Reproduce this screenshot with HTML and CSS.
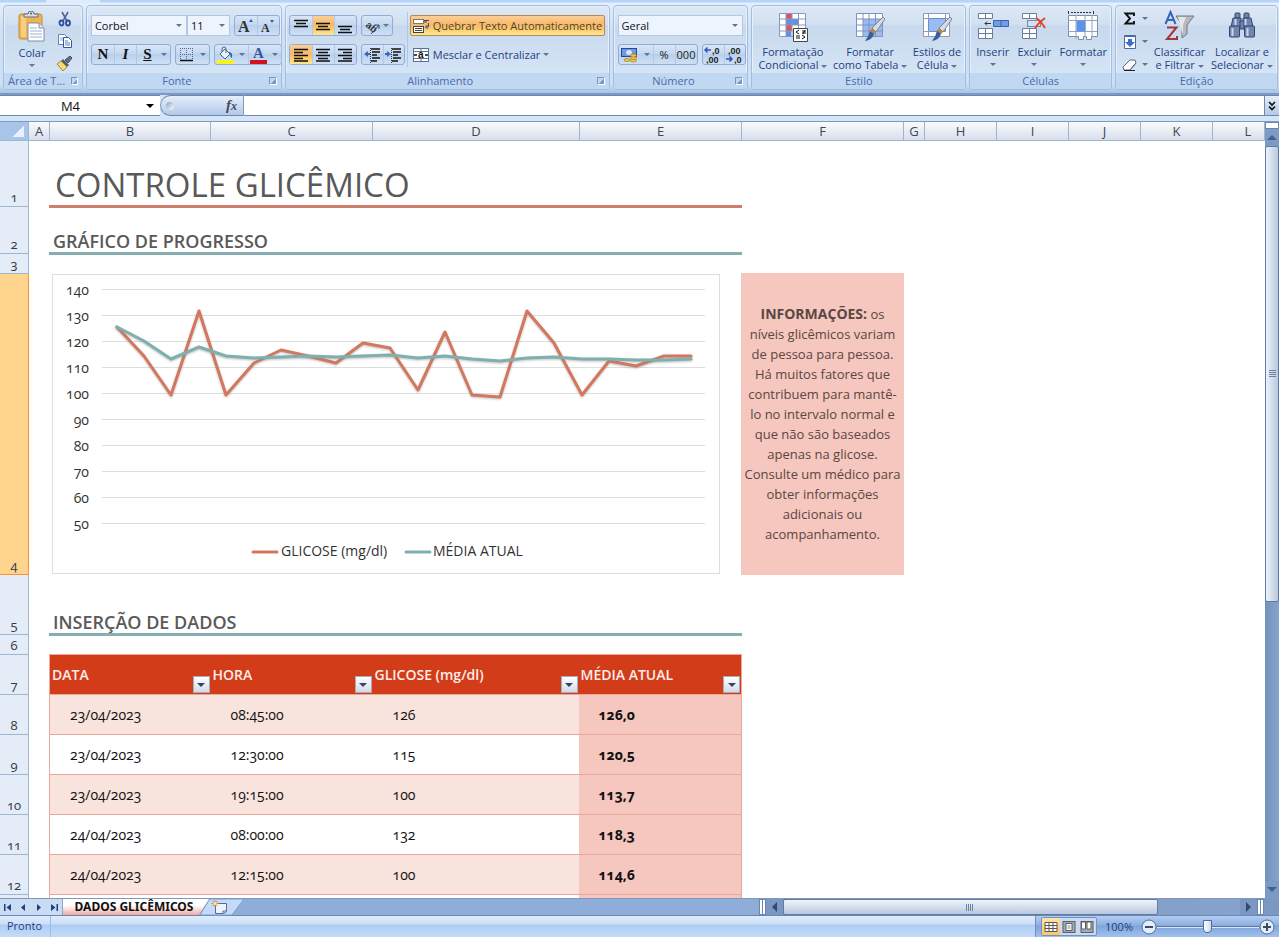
FILE: index.html
```html
<!DOCTYPE html>
<html lang="pt-BR">
<head>
<meta charset="utf-8">
<title>Controle Glicêmico</title>
<link rel="stylesheet" href="styles.css">
</head>
<body>
<div class="app">
  <header class="ribbon">
    <section class="group">
      <div class="group-body clipboard">
        <button class="big">
          <svg width="28" height="32" viewBox="0 0 28 32"><rect x="1" y="3" width="23" height="25" rx="2" fill="#efb453" stroke="#c58a35"/><path d="M3 5h5v21H3z" fill="#f8cd7e"/><path d="M6 6V3h4a3 3 0 0 1 6 0h4v3z" fill="#d9dee6" stroke="#6b6f78"/><circle cx="13" cy="2.500" r="1" fill="#555"/><path d="M10 12h11l5 5v13H10z" fill="#fff" stroke="#7e8eab"/><path d="M21 12v5h5" fill="#dbe5f5" stroke="#7e8eab"/><path d="M12 17h7M12 20h12M12 23h12M12 26h12" stroke="#9db0d0"/></svg>
          <span>Colar</span><i class="caret"></i>
        </button>
        <div class="stack">
          <button aria-label="Recortar"><svg width="16" height="16" viewBox="0 0 16 16"><path d="M5 1l5 9M11 1L6 10" stroke="#51689b" stroke-width="1.600" fill="none"/><ellipse cx="4.500" cy="12" rx="2" ry="2.500" fill="none" stroke="#2e4ba3" stroke-width="1.800"/><ellipse cx="11" cy="12" rx="2" ry="2.500" fill="none" stroke="#2e4ba3" stroke-width="1.800"/></svg></button>
          <button aria-label="Copiar"><svg width="16" height="16" viewBox="0 0 16 16"><path d="M1.500 1.500h6l3 3v7h-9z" fill="#fff" stroke="#6180b8"/><path d="M3 5h5M3 7h5" stroke="#8aa3d2"/><path d="M6.500 4.500h5l3 3v7h-8z" fill="#fff" stroke="#35559f"/><path d="M8 8h3M8 10h5M8 12h5" stroke="#5f7fc0"/></svg></button>
          <button aria-label="Pincel de formatação"><svg width="16" height="16" viewBox="0 0 16 16"><path d="M13 1l2 2-4 5-3-3z" fill="#6b6f86" stroke="#444a63"/><path d="M6 4l6 6-2 2-6-6z" fill="#525b74"/><path d="M4 6l6 6-4 4-6-7z" fill="#f3d97c" stroke="#a98735"/></svg></button>
        </div>
      </div>
      <footer><span>Área de T...</span><button class="launch" aria-label="Opções da área de transferência"></button></footer>
    </section>

    <section class="group">
      <div class="group-body rows">
        <div class="line">
          <span class="combos"><span class="combo font-name"><select aria-label="Fonte"><option>Corbel</option></select></span><span class="combo font-size"><select aria-label="Tamanho da fonte"><option>11</option></select></span></span>
          <span class="set">
            <button aria-label="Aumentar fonte"><svg width="18" height="18" viewBox="0 0 18 18"><text x="1" y="15" class="glyph-lg">A</text><path d="M12 5l2-3 2 3z" fill="#3b5da0"/></svg></button>
            <button aria-label="Diminuir fonte"><svg width="18" height="18" viewBox="0 0 18 18"><text x="2" y="15" class="glyph-sm">A</text><path d="M11 3h4l-2 3z" fill="#3b5da0"/></svg></button>
          </span>
        </div>
        <div class="line">
          <span class="set"><button class="serif">N</button><button class="serif italic">I</button><button class="serif under">S</button><button class="arrow" aria-label="Mais sublinhados"><i class="caret"></i></button></span>
          <span class="set"><button class="tight" aria-label="Bordas"><svg width="15" height="15" viewBox="0 0 15 15"><path d="M1 1.500h13M1 7.500h13M1.500 1v12M7.500 1v12M13.500 1v12" stroke="#53658a" stroke-dasharray="1 1"/><path d="M1 13.500h13" stroke="#111" stroke-width="1.500"/></svg></button><button class="arrow" aria-label="Mais bordas"><i class="caret"></i></button></span>
          <span class="set">
            <button class="tight" aria-label="Cor de preenchimento"><svg width="17" height="18" viewBox="0 0 17 18"><path d="M3 8l5-5 5 5-5 5z" fill="#e9f0fa" stroke="#52658e"/><path d="M5 6V3a2 2 0 0 1 4 0v4" fill="none" stroke="#52658e"/><path d="M11 6q5-1 4 6q-2-1-2-4z" fill="#345fb0"/><rect y="14" width="17" height="4" fill="#f6f523"/></svg></button><button class="arrow" aria-label="Mais cores de preenchimento"><i class="caret"></i></button>
            <button class="tight" aria-label="Cor da fonte"><svg width="17" height="18" viewBox="0 0 17 18"><text x="3" y="12" class="glyph-blue">A</text><rect y="14" width="17" height="4" fill="#d3121f"/></svg></button><button class="arrow" aria-label="Mais cores da fonte"><i class="caret"></i></button>
          </span>
        </div>
      </div>
      <footer><span>Fonte</span><button class="launch" aria-label="Opções de fonte"></button></footer>
    </section>

    <section class="group">
      <div class="group-body align">
        <div class="rows left">
          <div class="line">
            <span class="set">
              <button aria-label="Alinhar em cima"><svg width="16" height="16" viewBox="0 0 16 16"><path d="M1 2.500h14M3 5.500h10M1 8.500h14" stroke="#111" stroke-width="1.500"/></svg></button>
              <button class="on" aria-label="Alinhar no meio"><svg width="16" height="16" viewBox="0 0 16 16"><path d="M1 5.500h14M3 8.500h10M1 11.500h14" stroke="#111" stroke-width="1.500"/></svg></button>
              <button aria-label="Alinhar embaixo"><svg width="16" height="16" viewBox="0 0 16 16"><path d="M1 8.500h14M3 11.500h10M1 14.500h14" stroke="#111" stroke-width="1.500"/></svg></button>
            </span>
            <span class="set"><button aria-label="Orientação"><svg width="18" height="18" viewBox="0 0 18 18"><text x="2" y="9" transform="rotate(40 2 9)" class="glyph-ab">ab</text><path d="M8 17l8-9m-4 0h4v4" fill="none" stroke="#39445c"/></svg><i class="caret"></i></button></span>
          </div>
          <div class="line">
            <span class="set">
              <button class="on" aria-label="Alinhar à esquerda"><svg width="16" height="16" viewBox="0 0 16 16"><path d="M1 2.500h14M1 5.500h9M1 8.500h14M1 11.500h9M1 14h14" stroke="#111" stroke-width="1.400"/></svg></button>
              <button aria-label="Centralizar"><svg width="16" height="16" viewBox="0 0 16 16"><path d="M1 2.500h14M3 5.500h10M1 8.500h14M3 11.500h10M1 14h14" stroke="#111" stroke-width="1.400"/></svg></button>
              <button aria-label="Alinhar à direita"><svg width="16" height="16" viewBox="0 0 16 16"><path d="M1 2.500h14M6 5.500h9M1 8.500h14M6 11.500h9M1 14h14" stroke="#111" stroke-width="1.400"/></svg></button>
            </span>
            <span class="set">
              <button class="tight" aria-label="Diminuir recuo"><svg width="17" height="16" viewBox="0 0 17 16"><path d="M7 2h9M8 5h8M8 8h5M8 11h8M7 14h6" stroke="#111" stroke-width="1.600"/><path d="M6.500 1v15" stroke="#333" stroke-dasharray="1 1"/><path d="M0 7l4-3v2h2v2H4v2z" fill="#3f66be"/></svg></button>
              <button class="tight" aria-label="Aumentar recuo"><svg width="17" height="16" viewBox="0 0 17 16"><path d="M7 2h9M8 5h8M8 8h5M8 11h8M7 14h6" stroke="#111" stroke-width="1.600"/><path d="M6.500 1v15" stroke="#333" stroke-dasharray="1 1"/><path d="M6 7L2 4v2H0v2h2v2z" fill="#3f66be"/></svg></button>
            </span>
          </div>
        </div>
        <div class="rows right">
          <button class="wide on"><svg width="17" height="16" viewBox="0 0 17 16"><rect x=".5" y="1.500" width="10" height="4" fill="#fff" stroke="#777"/><path d="M11 2.500h5M11 4h3" stroke="#444"/><rect x=".5" y="8.500" width="10" height="6" fill="#fff" stroke="#444"/><path d="M2 10.500h7M2 12.500h7" stroke="#444"/><path d="M15.500 5v4l-3 0m2-2l-2 2 2 2" fill="none" stroke="#2e4ba3"/></svg><span>Quebrar Texto Automaticamente</span></button>
          <button class="wide"><svg width="17" height="16" viewBox="0 0 17 16"><rect x=".5" y="1.500" width="15" height="13" fill="#fff" stroke="#5d6f92"/><path d="M.5 4.500h15M.5 11.500h15M8 1.500v3M8 11.500v3" stroke="#5d6f92"/><text x="5" y="11" class="glyph-a">a</text><path d="M1 8h3M12 8h3" stroke="#111" stroke-width="1.500"/></svg><span>Mesclar e Centralizar</span><i class="caret"></i></button>
        </div>
      </div>
      <footer><span>Alinhamento</span><button class="launch" aria-label="Opções de alinhamento"></button></footer>
    </section>

    <section class="group">
      <div class="group-body rows">
        <div class="line"><span class="combo number"><select aria-label="Formato de número"><option>Geral</option></select></span></div>
        <div class="line">
          <span class="set">
            <button aria-label="Formato de contabilização"><svg width="17" height="16" viewBox="0 0 17 16"><rect x=".5" y="1.500" width="15" height="8" fill="#6f98dd" stroke="#24499b"/><ellipse cx="8" cy="5.500" rx="3" ry="2.500" fill="#d5e4fb"/><g fill="#f5c642" stroke="#9c6e15" stroke-width=".6"><ellipse cx="12.500" cy="13.500" rx="3" ry="1.500"/><ellipse cx="12.500" cy="11" rx="3" ry="1.500"/><ellipse cx="12.500" cy="8.500" rx="3" ry="1.500"/><ellipse cx="6" cy="13" rx="3" ry="1.500"/></g></svg></button><button class="arrow" aria-label="Mais moedas"><i class="caret"></i></button><button class="num">%</button><button class="num">000</button>
          </span>
          <span class="set">
            <button class="tight" aria-label="Aumentar casas decimais"><svg width="18" height="18" viewBox="0 0 18 18"><path d="M1 4h6M3.500 1.500L1 4l2.500 2.500" fill="none" stroke="#2c56b8" stroke-width="1.500"/><text x="8" y="8" class="digits">,0</text><text x="2" y="17" class="digits">,00</text></svg></button>
            <button class="tight" aria-label="Diminuir casas decimais"><svg width="18" height="18" viewBox="0 0 18 18"><text x="2" y="8" class="digits">,00</text><path d="M0 13h6M3.500 10.500L6 13l-2.500 2.500" fill="none" stroke="#2c56b8" stroke-width="1.500"/><text x="8" y="17" class="digits">,0</text></svg></button>
          </span>
        </div>
      </div>
      <footer><span>Número</span><button class="launch" aria-label="Opções de número"></button></footer>
    </section>

    <section class="group">
      <div class="group-body bigs">
        <button class="big">
          <svg width="30" height="32" viewBox="0 0 30 32"><path d="M1.500 3.500h26v23h-26z" fill="#fff"/><path d="M8 3h6v6H8zM8 15h6v6H8z" fill="#e2525a"/><path d="M8 9h12v6H8zM8 21h5v6H8z" fill="#6290dd"/><path d="M1.500 3.500h26v23h-26zM8 3v24M14 3v24M20.500 3v24M1 9h27M1 15h27M1 21h27" fill="none" stroke="#8599bd"/><path d="M15.500 18.500h14v13h-14z" fill="#fff" stroke="#444"/><path d="M21 20l-3 2 3 2M18 26h4M18 28h4M24 21h4M24 23h4M27 20l-2 4M24 25l3 2-3 2" fill="none" stroke="#111"/></svg>
          <span>Formatação<br>Condicional <i class="caret"></i></span>
        </button>
        <button class="big">
          <svg width="30" height="32" viewBox="0 0 30 32"><path d="M1.500 3.500h26v23h-26z" fill="#fff"/><path d="M8 9h20v18H8z" fill="#98bcf2"/><path d="M1.500 3.500h26v23h-26zM8 3v24M14 3v24M20.500 3v24M1 9h27M1 15h27M1 21h27" fill="none" stroke="#7d93bd"/><path d="M28 7l2 2-9 13-4-4z" fill="#d5dbe4" stroke="#7b8492"/><path d="M17 18l4 4-3 3-4-3z" fill="#bd8545"/><path d="M15 21l4 3q-2 6-9 7 4-5 5-10z" fill="#375f9e"/></svg>
          <span>Formatar<br>como Tabela <i class="caret"></i></span>
        </button>
        <button class="big">
          <svg width="30" height="32" viewBox="0 0 30 32"><path d="M1.500 3.500h26v23h-26z" fill="#fff" stroke="#8b9cb9"/><path d="M6.500 8.500h17v13h-17z" fill="#9abcf4" stroke="#6f8dc3"/><path d="M6.500 3v5M23.500 3v5M6.500 22v5M1 8.500h5M24 8.500h4M1 21.500h5" stroke="#8b9cb9"/><path d="M28 7l2 2-9 13-4-4z" fill="#d5dbe4" stroke="#7b8492"/><path d="M17 18l4 4-3 3-4-3z" fill="#bd8545"/><path d="M15 21l4 3q-2 6-9 7 4-5 5-10z" fill="#375f9e"/></svg>
          <span>Estilos de<br>Célula <i class="caret"></i></span>
        </button>
      </div>
      <footer><span>Estilo</span></footer>
    </section>

    <section class="group">
      <div class="group-body bigs">
        <button class="big">
          <svg width="32" height="32" viewBox="0 0 32 32"><path d="M1.500 3.500h14v5h-14zM8.500 3.500v5M1.500 18.500h14v10h-14zM8.500 18.500v10M1.500 23.500h14" fill="#fff" stroke="#6b7d9e"/><path d="M16.500 10.500h15v6h-15zM24 10.500v6" fill="#6f9de6" stroke="#3a63ab"/><path d="M14 13.500H8m2-2l-2 2 2 2" fill="none" stroke="#333"/></svg>
          <span>Inserir</span><i class="caret"></i>
        </button>
        <button class="big">
          <svg width="30" height="32" viewBox="0 0 30 32"><path d="M3.500 3.500h14v5h-14zM10.500 3.500v5M3.500 18.500h14v10h-14zM10.500 18.500v10M3.500 23.500h14" fill="#fff" stroke="#6b7d9e"/><path d="M8.500 10.500h13v6h-13z" fill="#cfe0f8" stroke="#333" stroke-dasharray="1 1"/><path d="M17 8q5 3 9 10M26 8q-6 4-10 10" fill="none" stroke="#e8402c" stroke-width="2"/></svg>
          <span>Excluir</span><i class="caret"></i>
        </button>
        <button class="big">
          <svg width="32" height="32" viewBox="0 0 32 32"><path d="M1.500 1v3M26.500 1v3" stroke="#333"/><path d="M4 2.500h21" stroke="#333" stroke-dasharray="2 1"/><path d="M1.500 5.500h29v21h-6v3h-5v-3h-3v3h-5v-3h-10z" fill="#fff" stroke="#7d8fae"/><path d="M9 5v24M18 5v22M25 5v22M1 10.500h29M1 21.500h29" stroke="#93a4c2"/><path d="M9.500 10.500h9v11h-9z" fill="#5f93e8"/></svg>
          <span>Formatar</span><i class="caret"></i>
        </button>
      </div>
      <footer><span>Células</span></footer>
    </section>

    <section class="group">
      <div class="group-body bigs edit">
        <div class="stack">
          <button aria-label="Soma"><svg width="15" height="15" viewBox="0 0 15 15"><path d="M12 5V2.500H3.500L8 7.500l-4.500 5H12V10" fill="none" stroke="#111" stroke-width="1.900"/></svg><i class="caret"></i></button>
          <button aria-label="Preencher"><svg width="14" height="16" viewBox="0 0 14 16"><path d="M1.500 1.500h11v13h-11z" fill="#fff" stroke="#4b69a5"/><path d="M1 2.500h12" stroke="#4b69a5"/><path d="M5 5h4v3h3l-5 5-5-5h3z" fill="#3a6fd0"/></svg><i class="caret"></i></button>
          <button aria-label="Limpar"><svg width="15" height="14" viewBox="0 0 15 14"><path d="M1 9l7-7h5l1 3-6 7H2z" fill="#fff" stroke="#5d6879"/><path d="M8 12l6-7" stroke="#5d6879"/><path d="M2 12.500h11" stroke="#222"/></svg><i class="caret"></i></button>
        </div>
        <button class="big">
          <svg width="32" height="32" viewBox="0 0 32 32"><path d="M12 6h18l-7 9v9l-5 4V15z" fill="#b9babd" stroke="#77797e"/><path d="M14 7h8l-3 8v10z" fill="#e5e6e8"/><path d="M1.500 14L6.500 2l5 12M3.500 10h6" fill="none" stroke="#3465bb" stroke-width="2"/><path d="M3 17.500h9.500L3 29h10v-3" fill="none" stroke="#a4373b" stroke-width="2"/></svg>
          <span>Classificar<br>e Filtrar <i class="caret"></i></span>
        </button>
        <button class="big">
          <svg width="32" height="32" viewBox="0 0 32 32"><g fill="#7085ad" stroke="#35466d"><rect x="9" y="3" width="5" height="5" rx="1"/><rect x="18" y="3" width="5" height="5" rx="1"/><path d="M7 8h8v9H5zM17 8h8l2 9H17z"/><rect x="14" y="11" width="4" height="8"/><rect x="3.500" y="16" width="10" height="11" rx="1"/><rect x="18.500" y="16" width="10" height="11" rx="1"/></g><path d="M6.500 18v8M21.500 18v8M9.500 9v6M19.500 9v6" stroke="#c9d6ee" stroke-width="2"/></svg>
          <span>Localizar e<br>Selecionar <i class="caret"></i></span>
        </button>
      </div>
      <footer><span>Edição</span></footer>
    </section>
  </header>

  <div class="formula">
    <div class="name-box"><input aria-label="Caixa de nome" value="M4"><button class="drop" aria-label="Nomes definidos"></button></div>
    <div class="fx"><i class="knob"></i><button aria-label="Inserir função"><em>f</em><em class="sub">x</em></button></div>
    <input class="formula-input" aria-label="Barra de fórmulas">
    <button class="expand" aria-label="Expandir barra de fórmulas"><svg width="8" height="10" viewBox="0 0 8 10"><path d="M1 1l3 3 3-3M1 5.500l3 3 3-3" fill="none" stroke="#111" stroke-width="1.600"/></svg></button>
  </div>

  <main class="work">
    <div class="sheet">
      <div class="ch corner"></div><div class="ch">A</div><div class="ch">B</div><div class="ch">C</div><div class="ch">D</div><div class="ch">E</div><div class="ch">F</div><div class="ch">G</div><div class="ch">H</div><div class="ch">I</div><div class="ch">J</div><div class="ch">K</div><div class="ch last">L</div>
      <div class="rh">1</div><div class="rh">2</div><div class="rh">3</div><div class="rh selected">4</div><div class="rh">5</div><div class="rh">6</div><div class="rh">7</div><div class="rh">8</div><div class="rh">9</div><div class="rh">10</div><div class="rh">11</div><div class="rh">12</div><div class="rh"></div>

      <h1>CONTROLE GLICÊMICO</h1>
      <h2 class="progress">GRÁFICO DE PROGRESSO</h2>
      <figure class="chart">
        <svg width="668" height="300" viewBox="0 0 668 300" role="img" aria-label="Gráfico de progresso">
          <rect class="frame" x=".5" y=".5" width="667" height="299"/>
          <path class="grid" d="M50 15.500h603M50 41.500h603M50 67.500h603M50 93.500h603M50 119.500h603M50 145.500h603M50 171.500h603M50 197.500h603M50 223.500h603M50 249.500h603"/>
          <g class="axis"><text x="37" y="21">140</text><text x="37" y="47">130</text><text x="37" y="73">120</text><text x="37" y="99">110</text><text x="37" y="125">100</text><text x="37" y="151">90</text><text x="37" y="177">80</text><text x="37" y="203">70</text><text x="37" y="229">60</text><text x="37" y="255">50</text></g>
          <polyline class="series glucose" points="65,53 92,82 119,121 147,37 174,121 202,89 229,76 256,82 284,89 311,69 338,74 366,116 393,58 420,121 448,123 475,37 502,69 530,121 557,87 584,92 612,82 639,82"/>
          <polyline class="series mean" points="65,53 92,67 119,85 147,73 174,82 202,84 229,83 256,82 284,83 311,82 338,81 366,84 393,82 420,85 448,87 475,84 502,83 530,85 557,85 584,86 612,86 639,85"/>
          <path class="key glucose" d="M201 278h24"/><text class="legend" x="229" y="282">GLICOSE (mg/dl)</text>
          <path class="key mean" d="M354 278h24"/><text class="legend" x="381" y="282">MÉDIA ATUAL</text>
        </svg>
      </figure>
      <aside><p><b>INFORMAÇÕES:</b> os<br>níveis glicêmicos variam<br>de pessoa para pessoa.<br>Há muitos fatores que<br>contribuem para mantê-<br>lo no intervalo normal e<br>que não são baseados<br>apenas na glicose.<br>Consulte um médico para<br>obter informações<br>adicionais ou<br>acompanhamento.</p></aside>
      <h2 class="entry">INSERÇÃO DE DADOS</h2>
      <table>
        <colgroup><col class="c-date"><col class="c-time"><col class="c-value"><col class="c-mean"></colgroup>
        <thead><tr>
          <th><div>DATA<button class="filter" aria-label="Filtrar data"></button></div></th>
          <th><div>HORA<button class="filter" aria-label="Filtrar hora"></button></div></th>
          <th><div>GLICOSE (mg/dl)<button class="filter" aria-label="Filtrar glicose"></button></div></th>
          <th><div>MÉDIA ATUAL<button class="filter" aria-label="Filtrar média"></button></div></th>
        </tr></thead>
        <tbody>
          <tr><td>23/04/2023</td><td>08:45:00</td><td>126</td><td>126,0</td></tr>
          <tr><td>23/04/2023</td><td>12:30:00</td><td>115</td><td>120,5</td></tr>
          <tr><td>23/04/2023</td><td>19:15:00</td><td>100</td><td>113,7</td></tr>
          <tr><td>24/04/2023</td><td>08:00:00</td><td>132</td><td>118,3</td></tr>
          <tr><td>24/04/2023</td><td>12:15:00</td><td>100</td><td>114,6</td></tr>
          <tr><td></td><td></td><td></td><td></td></tr>
        </tbody>
      </table>
    </div>
    <div class="vscroll">
      <i class="split"></i>
      <button class="up" aria-label="Rolar para cima"></button>
      <div class="track"><div class="thumb"></div></div>
      <button class="down" aria-label="Rolar para baixo"></button>
    </div>
  </main>

  <div class="tabs">
    <nav>
      <button aria-label="Primeira planilha"><svg width="9" height="9" viewBox="0 0 9 9"><path d="M1 1h1.500v7H1zM8 1v7L3.500 4.500z"/></svg></button>
      <button aria-label="Planilha anterior"><svg width="9" height="9" viewBox="0 0 9 9"><path d="M6 1v7L2 4.500z"/></svg></button>
      <button aria-label="Próxima planilha"><svg width="9" height="9" viewBox="0 0 9 9"><path d="M3 1v7l4-3.500z"/></svg></button>
      <button aria-label="Última planilha"><svg width="9" height="9" viewBox="0 0 9 9"><path d="M6.500 1H8v7H6.500zM1 1v7l4.500-3.500z"/></svg></button>
    </nav>
    <button class="tab">DADOS GLICÊMICOS</button>
    <button class="new-tab" aria-label="Inserir planilha"><svg width="46" height="17" viewBox="0 0 46 17"><path d="M1 16L10 1q1-1 3-1h32L33 16z" fill="#c3dbf8" stroke="#7b9cd0"/><path d="M16.500 4.500h11v8l-3 2h-8z" fill="#eef4fd" stroke="#5a6c94"/><path d="M24 14v-2h3" fill="none" stroke="#5a6c94"/><path d="M16 1v7M12.500 4.500h7M13.500 2l5 5M18.500 2l-5 5" stroke="#d98a24"/><circle cx="16" cy="4.500" r="1.500" fill="#ffe9a0"/></svg></button>
    <div class="hscroll">
      <i class="vsplit"></i>
      <button class="prev" aria-label="Rolar para a esquerda"></button>
      <div class="track"><div class="thumb"></div></div>
      <button class="next" aria-label="Rolar para a direita"></button>
      <i class="vsplit"></i>
    </div>
  </div>

  <footer class="status">
    <span class="ready">Pronto</span>
    <div class="views">
      <span class="view-set">
        <button class="on" aria-label="Normal"><svg width="14" height="12" viewBox="0 0 14 12"><path d="M1 1.500h12v9H1zM5 1.500v9M9 1.500v9M1 4.500h12M1 7.500h12" fill="#fff" stroke="#5d5a55"/></svg></button>
        <button aria-label="Layout da página"><svg width="14" height="12" viewBox="0 0 14 12"><rect x="1" y=".5" width="12" height="11" fill="#a5a9b0" stroke="#5d5f66"/><path d="M4 2.500h6v7H4z" fill="#fff" stroke="#5d5f66"/><path d="M5.500 5h3M5.500 7h3" stroke="#888"/></svg></button>
        <button aria-label="Visualização de quebra de página"><svg width="14" height="12" viewBox="0 0 14 12"><rect x="1" y=".5" width="12" height="11" fill="#a5a9b0" stroke="#5d5f66"/><path d="M1.500 1h4v7h-4zM7 1h4v7H7z" fill="#fff" stroke="#5d5f66"/></svg></button>
      </span>
      <button class="pct">100%</button>
      <button class="round" aria-label="Reduzir"><svg width="16" height="16" viewBox="0 0 16 16"><circle cx="8" cy="8" r="7" fill="#e2ecfa" stroke="#4f6c9c"/><path d="M4 8h8" stroke="#3f4b62" stroke-width="2"/></svg></button>
      <input type="range" aria-label="Zoom" min="0" max="100" value="49">
      <button class="round" aria-label="Ampliar"><svg width="16" height="16" viewBox="0 0 16 16"><circle cx="8" cy="8" r="7" fill="#e2ecfa" stroke="#4f6c9c"/><path d="M4 8h8M8 4v8" stroke="#3f4b62" stroke-width="2"/></svg></button>
    </div>
  </footer>
</div>
</body>
</html>
```
FILE: styles.css
```css
* { box-sizing: border-box; }
body { margin: 0; }
.app { display: flex; flex-direction: column; height: 100vh; overflow: hidden; background: #bcd5f5; font: 11px/14px "Open Sans", "Noto Sans", sans-serif; color: #1f3f7f; }
button, input, select { font: inherit; color: inherit; margin: 0; padding: 0; border: 0; background: none; }
button { display: flex; align-items: center; justify-content: center; white-space: nowrap; }
svg { flex: none; display: block; }

.caret { display: inline-block; flex: none; width: 0; border: 3px solid transparent; border-top-color: #5f7499; border-bottom: 0; vertical-align: middle; }

/* Ribbon */
.ribbon { display: grid; grid-template-columns: 80fr 196fr 325fr 136fr 215fr 143fr 163fr; gap: 3px; flex: none; height: 95px; padding: 5px 1px 3px 3px; border-bottom: 2px solid #7d9ac4; background: linear-gradient(#dfecfb, #dfecfb) 46px 0 / 54px 3px no-repeat, linear-gradient(#b5d3f8 0, #b5d3f8 2px, #e3effc 3px, #d0e0f4 30px, #cde0f6 84px, #a8c3e6 93px); }
.group { display: flex; flex-direction: column; min-width: 0; overflow: hidden; border: 1px solid #a3bddf; border-radius: 4px; background: linear-gradient(#dde8f5, #d2e0f1 18px, #c8d9ed 20px, #d8e8f8); box-shadow: inset 0 0 0 1px #e8f1fb; }
.group-body { flex: 1; min-height: 0; }
.group footer { display: flex; align-items: center; height: 16px; padding: 0 4px; background: #c0d8f1; color: #4a6cab; }
.group footer span { flex: 1; text-align: center; white-space: nowrap; }
.launch { width: 8px; height: 8px; margin-left: 6px; border: 1px solid #fff; border-top-color: #7e97bd; border-left-color: #7e97bd; background: linear-gradient(135deg, transparent 55%, #7f97bd 55%); }
.clipboard { display: flex; justify-content: space-between; padding: 5px 9px 0 14px; }
.clipboard .stack { display: flex; flex-direction: column; gap: 6px; }
.big { flex-direction: column; justify-content: flex-start; line-height: 13px; text-align: center; }
.big span { padding-top: 3px; }
.big > .caret { margin-top: 5px; }
.rows { display: flex; flex-direction: column; gap: 8px; padding: 9px 4px 0 4px; }
.line { display: flex; justify-content: space-between; gap: 4px; height: 21px; }
.set { display: flex; border: 1px solid #8fadd6; border-radius: 3px; background: linear-gradient(#d8e6f7, #c5d8f0 45%, #b9d0ec 50%, #cfe0f5); }
.set button { min-width: 22px; padding: 0 1px; }
.set .tight { min-width: 21px; }
.set button + button { border-left: 1px solid #b2c9e6; }
.set .arrow { min-width: 11px; border-left: 0; }
.set .caret { margin: 0 2px; }
.set .on, .wide.on { background: linear-gradient(#fbcf98, #f9b76a 45%, #fbc463 60%, #fee593); }
.serif { font: bold 15px "Liberation Serif", serif; color: #111; }
.italic { font-style: italic; }
.under { text-decoration: underline; }
.num { color: #222; }
.combos { display: flex; }
.combo { display: flex; align-items: center; border: 1px solid #b0c7e5; background: #edf4fd; color: #111; }
.combo select { width: 100%; height: 100%; padding-left: 3px; appearance: none; outline: 0; }
.combo::after { content: ""; flex: none; margin-right: 4px; border: 3px solid transparent; border-top-color: #5f7499; border-bottom: 0; }
.font-name { width: 96px; }
.font-size { width: 43px; }
.number { flex: 1; }
.align { display: flex; }
.align .left { padding: 9px 2px 0 3px; }
.left .line { justify-content: flex-start; }
.align .right { flex: 1; align-items: flex-start; padding: 9px 0 0 3px; margin-bottom: 6px; background: linear-gradient(#b0c6e2, #b0c6e2) 0 6px / 1px 100% no-repeat; }
.wide { gap: 3px; height: 21px; padding: 0 2px; border: 1px solid transparent; border-radius: 2px; }
.wide.on { border-color: #b38b54; color: #4d4531; }
.bigs { display: flex; justify-content: space-between; padding: 4px 4px 0 6px; }
.edit .stack { display: flex; flex-direction: column; gap: 6px; }
.edit .stack button { gap: 5px; height: 17px; }
.glyph-lg { font: bold 16px "Liberation Serif", serif; fill: #333; }
.glyph-sm { font: bold 12px "Liberation Serif", serif; fill: #333; }
.glyph-blue { font: bold 15px "Liberation Serif", serif; fill: #33589c; }
.glyph-ab { font: bold 10px "Liberation Sans", sans-serif; fill: #333; }
.glyph-a { font: bold 10px "Liberation Sans", sans-serif; fill: #111; }
.digits { font: bold 9px "Liberation Sans", sans-serif; fill: #222; }

/* Formula bar */
.formula { display: flex; flex: none; height: 27px; padding-bottom: 5px; border-bottom: 1px solid #7e98bf; background: #d5e5f8; color: #111; }
.formula > * { border-top: 1px solid #6f87ab; border-bottom: 1px solid #6f87ab; }
.name-box { display: flex; align-items: center; width: 160px; background: #fff; }
.name-box input { flex: 1; min-width: 0; padding: 0 5px 0 0; text-align: center; font-size: 13px; outline: 0; }
.drop { margin: 0 6px 0 0; border: 4px solid transparent; border-top: 4px solid #000; border-bottom: 0; }
.fx { display: flex; align-items: center; justify-content: space-between; width: 84px; padding: 0 6px 0 5px; border-left: 1px solid #8397b7; border-right: 1px solid #8397b7; border-radius: 11px 0 0 11px; background: linear-gradient(#e6eefa, #b3c9ea); }
.knob { width: 8px; height: 8px; border-radius: 50%; background: linear-gradient(135deg, #8f9fb9, #fff); }
.fx button { align-items: baseline; font: bold 15px/16px "Liberation Serif", serif; color: #444c5c; }
.fx .sub { font-size: 12px; }
.formula .formula-input { flex: 1; min-width: 0; padding: 0 4px; background: #fff; outline: 0; }
.formula .expand { width: 15px; border-left: 1px solid #6f87ab; background: linear-gradient(#e6eefa, #b3c9ea); }

/* Worksheet */
.work { display: flex; flex: 1; min-height: 0; background: #fff; }
.sheet { display: grid; flex: 1; min-width: 0; overflow: hidden; grid-template-columns: 29px 21px 161px 162px 207px 162px 162px 21px 72px 72px 72px 72px minmax(51px, 1fr); grid-template-rows: 19px 66px 47px 20px 301px 60px 20px 40px 40px 40px 40px 40px 40px 40px; font-size: 14px; font-variant-numeric: oldstyle-nums; color: #595959; }
.ch { grid-row: 1; border-right: 1px solid #9eb6ce; border-bottom: 1px solid #9eb6ce; background: linear-gradient(#f9fbfd, #d8dfeb); text-align: center; font-size: 13px; line-height: 18px; color: #3f4756; }
.ch.last { padding-left: 19px; }
.corner { background: linear-gradient(135deg, transparent 60%, #e8f1fc 60%) 8px 2px / 16px 13px no-repeat, #a9c4e9; }
.rh { grid-column: 1; display: flex; align-items: flex-end; justify-content: center; padding-bottom: 1px; border-right: 1px solid #9eb6ce; border-bottom: 1px solid #9eb6ce; background: #e4ecf7; font-size: 13px; line-height: 16px; color: #333b49; }
.rh.selected { border-color: #f29536; background: #ffd58d; }
h1, h2, figure, p { margin: 0; }
h1, h2, table { grid-column: 3 / 7; margin-left: -1px; }
h1 { grid-row: 2; display: flex; align-items: flex-end; padding: 0 6px; border-bottom: 3px solid #ce7e6c; font-size: 33px; font-weight: 400; line-height: 40px; }
h2 { display: flex; align-items: flex-end; padding: 0 4px; border-bottom: 3px solid #87aeb0; font-size: 18px; font-weight: 600; line-height: 22px; }
h1, h2 { margin-bottom: -1px; }
.progress { grid-row: 3; }
.entry { grid-row: 6; }
.chart { grid-area: 5 / 3 / 6 / 7; padding-left: 2px; }
.frame { fill: #fff; stroke: #d9dfdf; }
.grid { stroke: #d9dfdf; fill: none; }
.axis { text-anchor: end; fill: #333; font-size: 14px; }
.legend { fill: #333; font-size: 14px; }
.series { fill: none; stroke-width: 3; stroke-linecap: round; stroke-linejoin: round; filter: drop-shadow(0 1px 1px #8888); }
.key { stroke-width: 3; stroke-linecap: round; }
.glucose { stroke: #d3775f; }
.mean { stroke: #7fb0ad; }
aside { grid-area: 5 / 7; display: flex; align-items: flex-start; justify-content: center; margin: -1px 0 0 -1px; padding-top: 31px; background: #f5c7be; color: #5a4642; text-align: center; line-height: 20px; white-space: nowrap; font-size: 13px; }
aside b { font-weight: 700; font-size: 14px; }
table { grid-row: 8 / 15; align-self: start; width: calc(100% + 1px); margin-top: -1px; table-layout: fixed; border-collapse: collapse; border: 1px solid #e8a99b; color: #111; }
.c-date { width: 161px; }
.c-time { width: 162px; }
.c-value { width: 206px; }
tr { height: 40px; }
th { padding: 0; background: #d23c19; color: #fdeee9; font-weight: 600; font-size: 14px; }
th div { display: flex; justify-content: space-between; align-items: center; height: 39px; padding-left: 2px; }
.filter { align-self: flex-end; width: 17px; height: 17px; margin: 0 1px 1px 0; border: 1px solid #a7adb9; background: linear-gradient(#fff, #d3dae6); }
.filter::after { content: ""; border: 4px solid transparent; border-top-color: #334467; border-bottom: 0; }
td { padding: 0 20px; border-top: 1px solid #e8a99b; }
tbody tr:nth-child(odd) { background: #f9e3dd; }
td:last-child { background: #f5c7be; font-weight: 700; }

/* Scroll bars */
.vscroll { display: flex; flex-direction: column; width: 14px; background: #7b9ac6; }
.split { height: 7px; border: 1px solid #6b86b1; background: #fff; }
.up, .down { height: 17px; }
.up::after { content: ""; border: 5px solid transparent; border-bottom-color: #435f8e; border-top: 0; }
.down::after { content: ""; border: 5px solid transparent; border-top-color: #435f8e; border-bottom: 0; }
.track { flex: 1; min-width: 0; background: linear-gradient(90deg, #7392bb, #86a4cb); }
.thumb { border: 1px solid #5f7ca8; border-radius: 2px; }
.vscroll .thumb { height: 62%; background: repeating-linear-gradient(#6d83a6 0, #6d83a6 1px, transparent 1px, transparent 2px) center / 7px 8px no-repeat, linear-gradient(90deg, #edf2f9, #b9c8de); }

/* Sheet tabs */
.tabs { display: flex; flex: none; height: 18px; border-top: 1px solid #7e98bf; border-bottom: 1px solid #6b86b1; background: #8fadd9; }
.tabs nav { display: flex; width: 63px; border-right: 1px solid #8ba5cd; background: #cadcf4; fill: #1f4080; }
.tabs nav button { flex: 1; }
.tab { width: 146px; padding-right: 4px; background: linear-gradient(#fff 40%, #f2a99b); clip-path: polygon(0 0, 100% 0, 93% 100%, 0 100%); color: #111; font: bold 12px/16px "Noto Sans", sans-serif; }
.new-tab { margin-left: -10px; }
.hscroll { display: flex; width: 520px; margin-left: auto; background: #7b98c2; }
.vsplit { width: 7px; border: 1px solid #6b86b1; background: linear-gradient(90deg, transparent 2px, #6b86b1 2px, #6b86b1 3px, transparent 3px), #fff; }
.hscroll button { width: 17px; }
.prev::after { content: ""; border: 5px solid transparent; border-right-color: #33496f; border-left: 0; }
.next::after { content: ""; border: 5px solid transparent; border-left-color: #33496f; border-right: 0; }
.hscroll .thumb { width: 82%; height: 100%; background: repeating-linear-gradient(90deg, #6d83a6 0, #6d83a6 1px, transparent 1px, transparent 2px) center / 8px 7px no-repeat, linear-gradient(#f0f4fa, #b9c8de); }
.hscroll .vsplit:last-child { margin-right: 15px; }

/* Status bar */
.status { display: flex; flex: none; align-items: stretch; height: 21px; background: linear-gradient(#e0ecfb, #cbdff8 8px, #aeccf3 9px, #c5dcf8); line-height: 20px; }
.ready { padding: 0 8px 0 7px; border-right: 1px solid #9dbbe6; }
.views { display: flex; align-items: center; margin-left: auto; padding: 0 4px 0 5px; border-left: 1px solid #6f90c4; background: linear-gradient(#b2cdf3, #8eb0e1 9px, #7fa4da 10px, #a3c1ec); }
.view-set { display: flex; border: 1px solid #7391c1; border-radius: 2px; background: #c9dbf3; }
.view-set button { width: 18px; height: 17px; }
.view-set .on { background: linear-gradient(#fde3a8, #fbc566); }
.pct { padding: 0 8px; }
input[type="range"] { width: 102px; height: 16px; appearance: none; background: linear-gradient(#5877ad, #5877ad) 0 7px / 100% 1px no-repeat, linear-gradient(#dce8fa, #dce8fa) 0 8px / 100% 1px no-repeat; }
input[type="range"]::-webkit-slider-thumb { appearance: none; width: 9px; height: 13px; border: 1px solid #4f6c9c; border-radius: 1px 1px 5px 5px; background: linear-gradient(90deg, #fff, #cddcf2); }
```
